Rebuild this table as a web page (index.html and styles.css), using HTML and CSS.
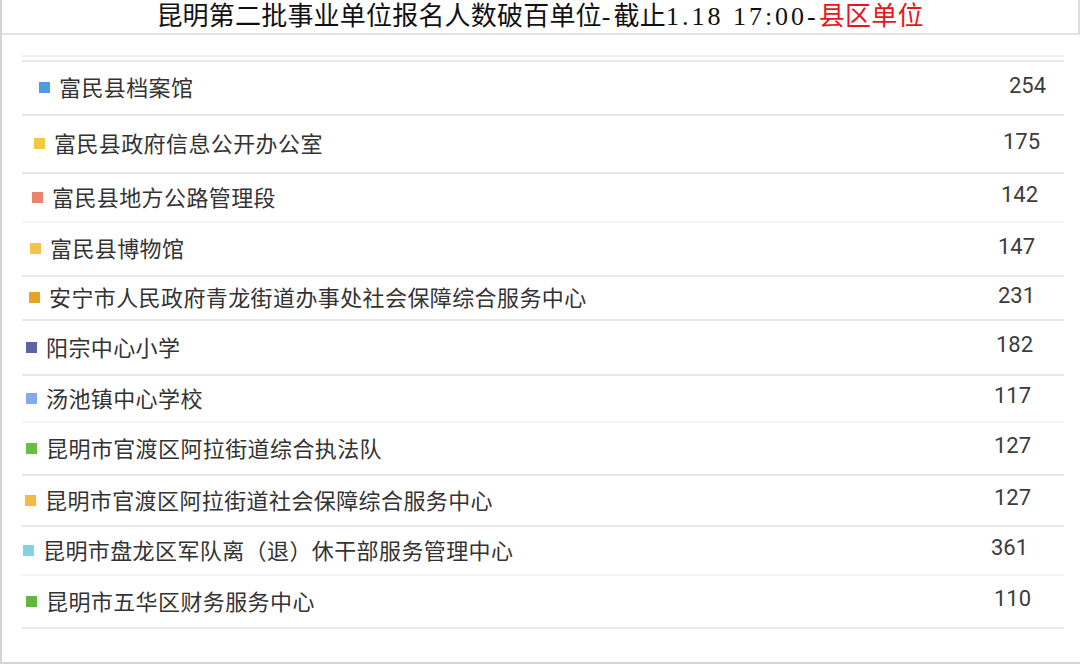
FILE: index.html
```html
<!DOCTYPE html>
<html lang="zh-CN">
<head>
<meta charset="utf-8">
<title>昆明第二批事业单位报名人数破百单位</title>
<link rel="stylesheet" href="styles.css">
</head>
<body>
<div class="page">
  <header class="title-bar">
    <h1 class="title">昆明第二批事业单位报名人数破百单位<span class="lat">-</span>截止<span class="lat">1.18 17:00-</span><span class="hl">县区单位</span></h1>
  </header>
  <section class="panel">
    <div class="list-wrap">
      <ul class="rows">
        <li class="row"><span class="name"><i class="dot c1"></i>富民县档案馆</span><span class="num">254</span></li>
        <li class="row"><span class="name"><i class="dot c2"></i>富民县政府信息公开办公室</span><span class="num">175</span></li>
        <li class="row faint"><span class="name"><i class="dot c3"></i>富民县地方公路管理段</span><span class="num">142</span></li>
        <li class="row"><span class="name"><i class="dot c4"></i>富民县博物馆</span><span class="num">147</span></li>
        <li class="row"><span class="name"><i class="dot c5"></i>安宁市人民政府青龙街道办事处社会保障综合服务中心</span><span class="num">231</span></li>
        <li class="row"><span class="name"><i class="dot c6"></i>阳宗中心小学</span><span class="num">182</span></li>
        <li class="row faint"><span class="name"><i class="dot c7"></i>汤池镇中心学校</span><span class="num">117</span></li>
        <li class="row"><span class="name"><i class="dot c8"></i>昆明市官渡区阿拉街道综合执法队</span><span class="num">127</span></li>
        <li class="row"><span class="name"><i class="dot c9"></i>昆明市官渡区阿拉街道社会保障综合服务中心</span><span class="num">127</span></li>
        <li class="row faint"><span class="name"><i class="dot c10"></i>昆明市盘龙区军队离（退）休干部服务管理中心</span><span class="num">361</span></li>
        <li class="row"><span class="name"><i class="dot c11"></i>昆明市五华区财务服务中心</span><span class="num">110</span></li>
      </ul>
    </div>
  </section>
</div>
</body>
</html>
```
FILE: styles.css
```css
* { box-sizing: border-box; }

html, body {
  margin: 0;
  padding: 0;
  background: #ffffff;
}

.page {
  width: 1080px;
  height: 664px;
  border-left: 2px solid #d4d4d4;
  border-bottom: 2px solid #d4d4d4;
  display: flex;
  flex-direction: column;
  overflow: hidden;
}

.title-bar {
  height: 35px;
  border-bottom: 2px solid #e2e2e2;
  border-right: 2px solid #dcdcdc;
  display: flex;
  align-items: center;
  justify-content: center;
}

.title {
  margin: 0;
  font-family: "Liberation Serif", "Noto Sans CJK SC", serif;
  font-weight: 400;
  font-size: 26px;
  line-height: 33px;
  letter-spacing: 0.2px;
  color: #111111;
  white-space: nowrap;
}

.title .lat {
  letter-spacing: 3px;
}

.title .hl {
  color: #e8141e;
}

.panel {
  flex: 1;
  padding: 20px 16px 0 20px;
}

.list-wrap {
  border-top: 2px solid #efefef;
  padding-top: 3px;
}

.rows {
  list-style: none;
  margin: 0;
  padding: 0;
  border-top: 2px solid #e8e8e8;
  display: grid;
  grid-template-rows: 54px 58px 49px 54px 44px 55px 47px 53px 51px 49px 53px;
}

.row {
  display: flex;
  align-items: center;
  justify-content: space-between;
  border-bottom: 2px solid #e8e8e8;
  padding-left: var(--pl, 4px);
  padding-right: var(--pr, 33px);
}

.row.faint {
  border-bottom-color: #f4f4f4;
}

.row:nth-child(1)  { --pl: 17px; --pr: 18px; }
.row:nth-child(2)  { --pl: 12px; --pr: 24px; }
.row:nth-child(3)  { --pl: 10px; --pr: 26px; }
.row:nth-child(4)  { --pl: 8px;  --pr: 29px; }
.row:nth-child(5)  { --pl: 7px;  --pr: 29px; }
.row:nth-child(6)  { --pl: 4px;  --pr: 31px; }
.row:nth-child(7)  { --pl: 4px;  --pr: 33px; }
.row:nth-child(8)  { --pl: 4px;  --pr: 33px; }
.row:nth-child(9)  { --pl: 3px;  --pr: 33px; }
.row:nth-child(10) { --pl: 1px;  --pr: 36px; }
.row:nth-child(11) { --pl: 4px;  --pr: 33px; }

.name {
  display: flex;
  align-items: center;
  font-family: "Noto Sans CJK SC", sans-serif;
  font-size: 22px;
  letter-spacing: 0.4px;
  color: #333333;
  white-space: nowrap;
  margin-bottom: 4px;
}

.dot {
  display: inline-block;
  width: 11px;
  height: 11px;
  margin-right: 9px;
  margin-top: 3px;
  flex: none;
}

.c1  { background: #4d9de6; }
.c2  { background: #f3c645; }
.c3  { background: #e9846d; }
.c4  { background: #f4c34a; }
.c5  { background: #eba125; }
.c6  { background: #5e62a8; }
.c7  { background: #86a8ef; }
.c8  { background: #6bbd43; }
.c9  { background: #f4b947; }
.c10 { background: #86d1df; }
.c11 { background: #62b83d; }

.num {
  font-family: Roboto, "Liberation Sans", sans-serif;
  font-size: 22px;
  color: #3c3c3c;
  margin-bottom: 6px;
}
```
